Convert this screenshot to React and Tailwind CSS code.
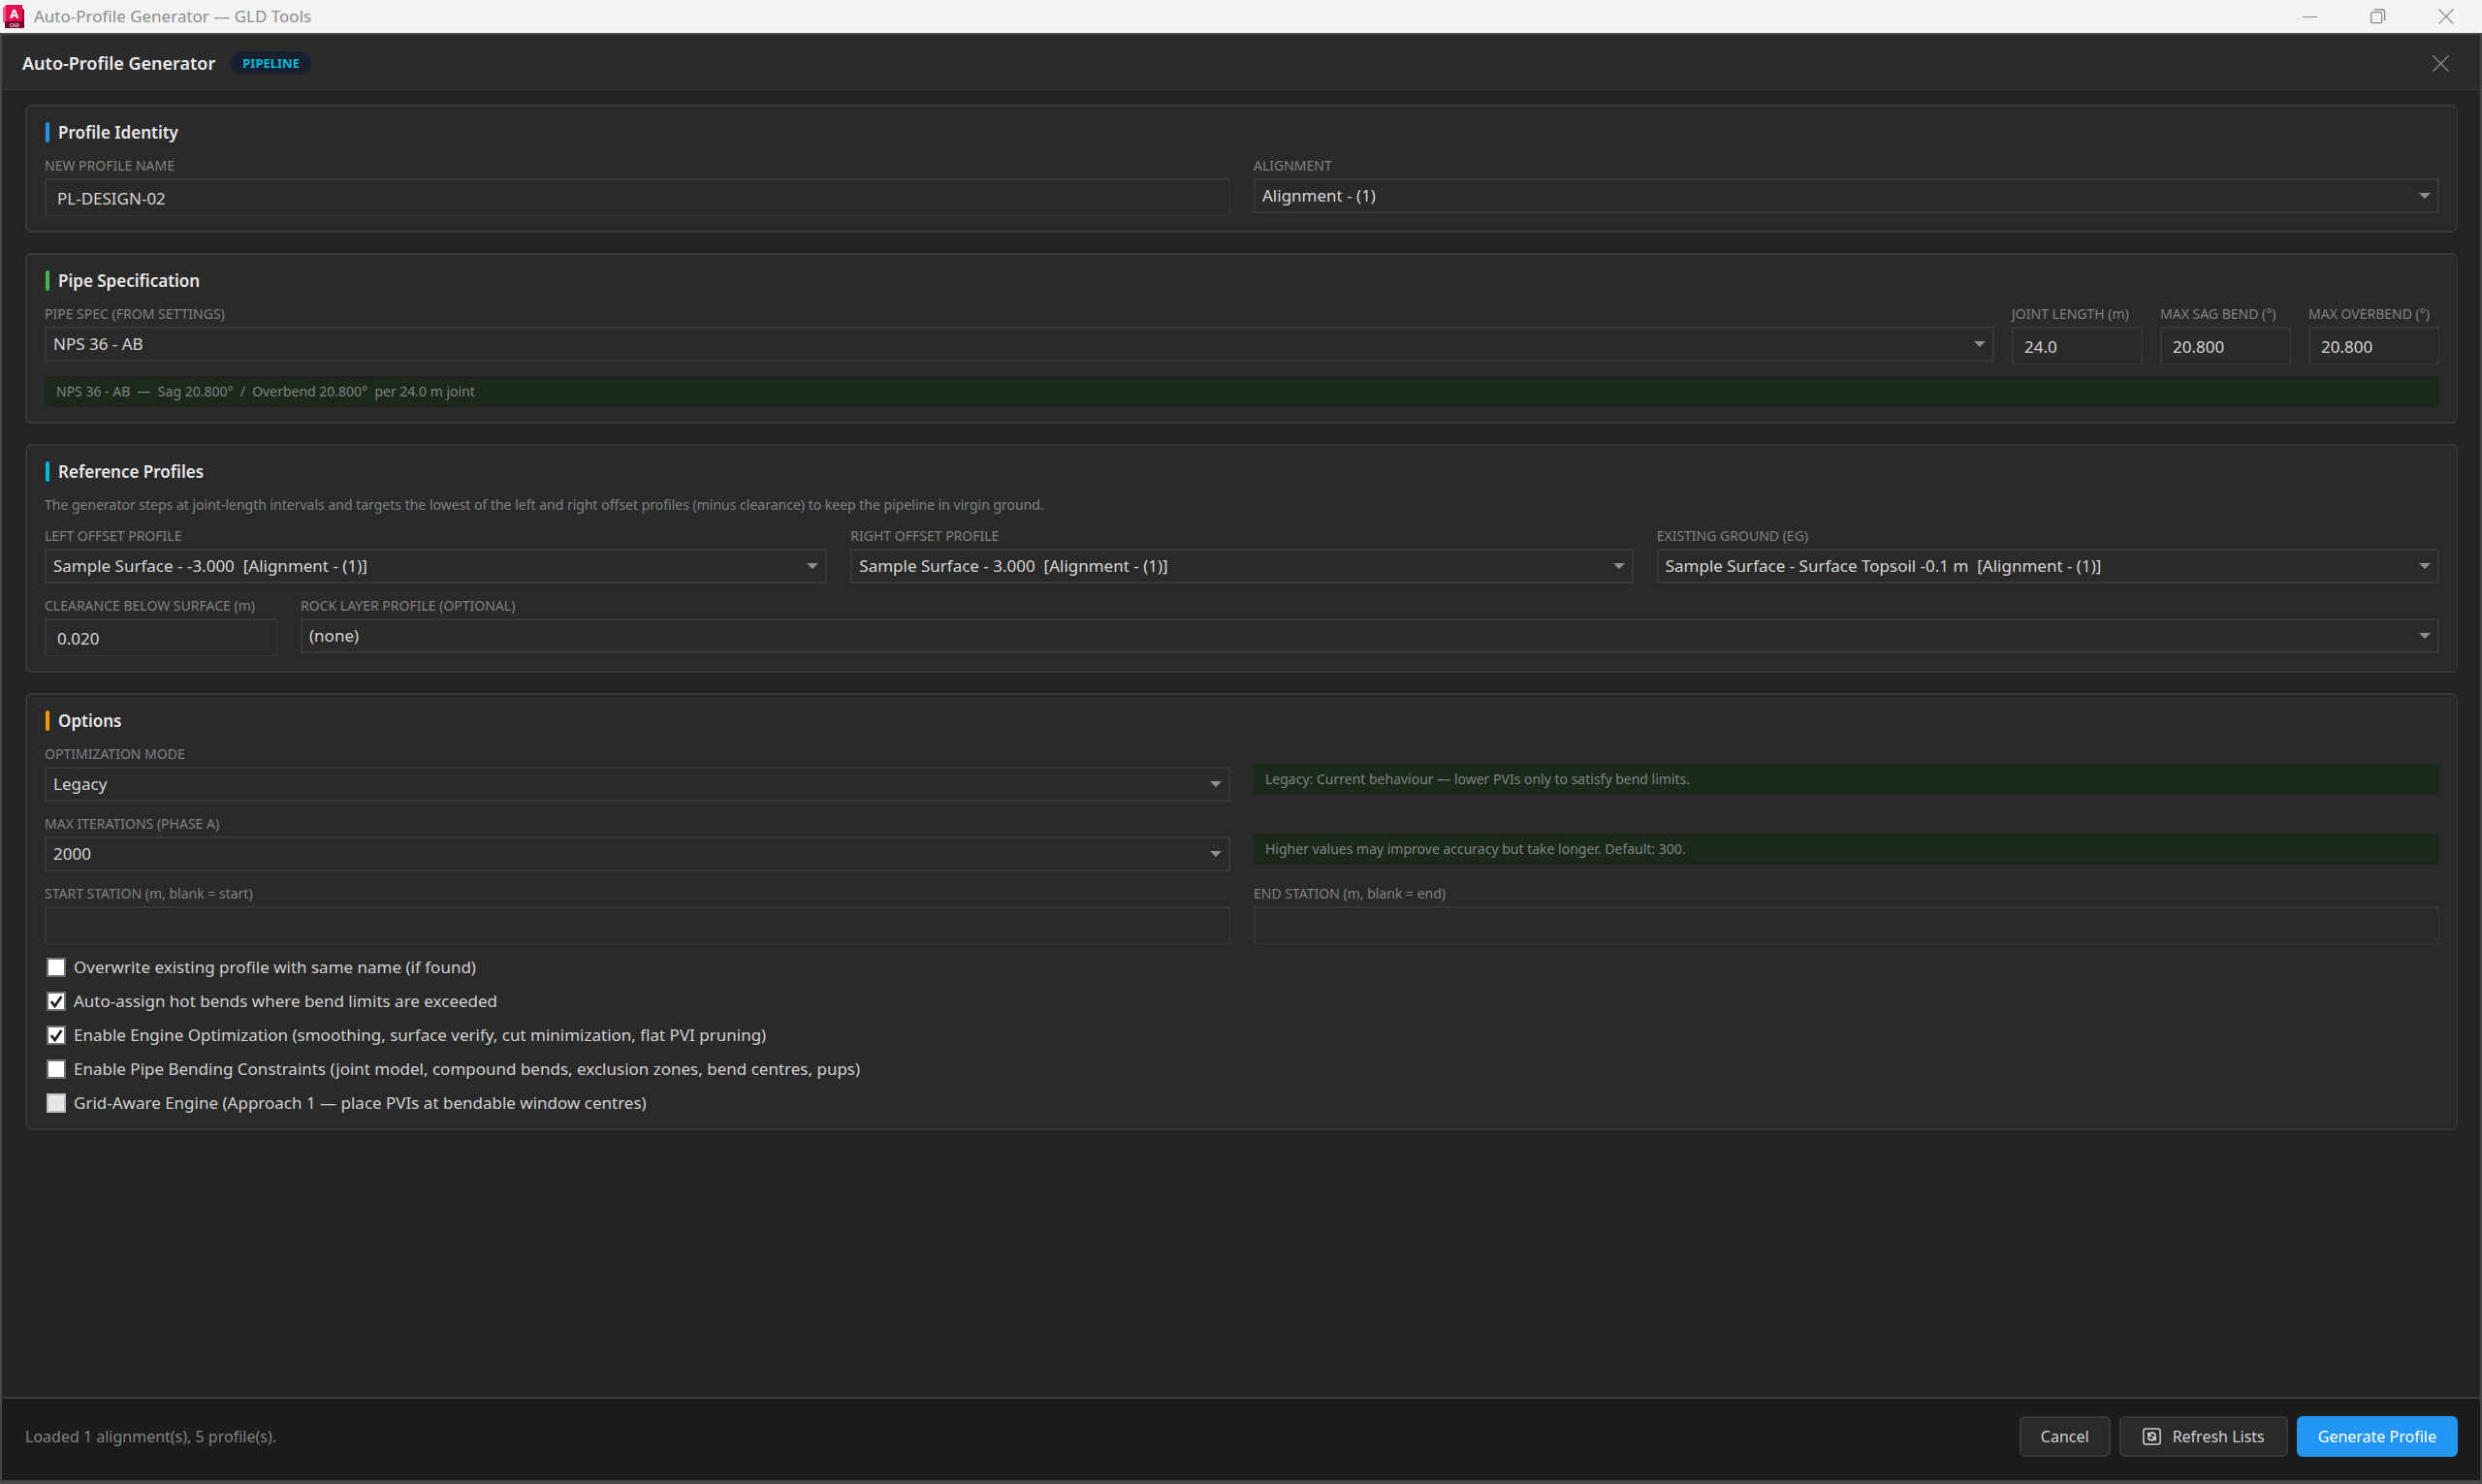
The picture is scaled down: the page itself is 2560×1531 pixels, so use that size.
import { useId } from "react";

function Card({ accent, title, children }) {
  return (
    <section className="rounded-md border-2 border-r border-[#383838] bg-[#2a2a2a] px-[18px] pt-4 pb-[15px]">
      <div className="mb-[13px] flex h-[21px] items-center gap-[9px]">
        <span className={`ml-px h-[21px] w-1 rounded-xs ${accent}`}></span>
        <h2 className="text-[17px] leading-[21px] font-semibold text-[#e8e8e8]">{title}</h2>
      </div>
      {children}
    </section>
  );
}

function Label({ htmlFor, children }) {
  return (
    <label
      htmlFor={htmlFor}
      className="mb-[3px] block text-sm leading-[21px] whitespace-nowrap text-[#828282]"
    >
      {children}
    </label>
  );
}

function TextField({ label, value = "", className = "" }) {
  const id = useId();
  return (
    <div className={className}>
      <Label htmlFor={id}>{label}</Label>
      <input
        id={id}
        type="text"
        defaultValue={value}
        className="block h-[39px] w-full border-2 border-r border-b border-[#383838] bg-[#2a2a2a] px-[11px] text-[17px] text-[#d6d6d6] outline-none focus:border-[#2196f3]"
      />
    </div>
  );
}

function SelectField({ label, options, className = "" }) {
  const id = useId();
  return (
    <div className={className}>
      <Label htmlFor={id}>{label}</Label>
      <div className="relative">
        <select
          id={id}
          className="block h-9 w-full appearance-none border-2 border-[#383838] bg-[#2a2a2a] pr-8 pl-[7px] text-[17px] text-[#d6d6d6] outline-none focus:border-[#2196f3]"
        >
          {options.map((o) => (
            <option key={o}>{o}</option>
          ))}
        </select>
        <svg
          className="pointer-events-none absolute top-[15px] right-[9px] h-[6px] w-3 fill-[#8f8f8f]"
          viewBox="0 0 12 6"
        >
          <path d="M0 0h12L6 6z" />
        </svg>
      </div>
    </div>
  );
}

function Hint({ children, className = "" }) {
  return (
    <p
      className={`h-8 rounded bg-[#1b291d] px-3 text-sm leading-8 whitespace-pre text-[#828282] ${className}`}
    >
      {children}
    </p>
  );
}

function CheckField({ label, checked = false, disabled = false }) {
  return (
    <label className="flex h-[23px] w-fit items-center gap-2 text-[17px] leading-[23px] text-[#d0d0d0]">
      <span className="relative ml-0.5 size-5">
        <input
          type="checkbox"
          defaultChecked={checked}
          disabled={disabled}
          className="peer block size-5 appearance-none border-2 border-[#707070] bg-white disabled:border-[#bcbcbc] disabled:bg-[#e6e6e6]"
        />
        <svg
          className="pointer-events-none absolute inset-0 hidden size-5 fill-none stroke-[#212121] peer-checked:block"
          viewBox="0 0 20 20"
        >
          <path d="M4.8 10.2 8.6 15 15.4 5" strokeWidth="2.8" />
        </svg>
      </span>
      {label}
    </label>
  );
}

function AppIcon() {
  return (
    <svg className="h-6 w-[22px]" viewBox="0 0 22 24">
      <path d="M0 3 3 0v18H0z" fill="#f0608a" />
      <path d="M3 0h17v17H3z" fill="#e51050" />
      <path d="M20 3.5 22 5v12h-2z" fill="#a30a35" />
      <path d="M2 17h20v7H2z" fill="#75082c" />
      <text x="11.8" y="13.5" textAnchor="middle" fontSize="13" fontWeight="700" fill="#fff">
        A
      </text>
      <text x="11.8" y="22.5" textAnchor="middle" fontSize="5" fontWeight="700" fill="#e8c8d2">
        CAD
      </text>
    </svg>
  );
}

function RefreshIcon() {
  return (
    <svg className="h-[18px] w-[19px]" viewBox="0 0 19 18">
      <rect x="0.9" y="0.9" width="17.2" height="16.2" rx="2.5" fill="none" stroke="#d0d0d0" strokeWidth="1.5" />
      <g fill="none" stroke="#d0d0d0" strokeWidth="1.9">
        <path d="M7 6.2c2.600-2 6-.7 6.4 2.300" />
        <path d="M12 11.8c-2.600 2-6 .7-6.400-2.300" />
      </g>
      <path d="M5 4v5h5z" fill="#d0d0d0" />
      <path d="M14 14V9H9z" fill="#d0d0d0" />
    </svg>
  );
}

export default function App() {
  return (
    <div className="flex min-h-screen flex-col bg-[#232323] font-['Noto_Sans','Open_Sans',sans-serif]">
      {/* Window title bar */}
      <div className="flex h-[34px] items-center bg-[#f3f3f3] pr-[29px] pl-[3px] text-[#8c8c8c]">
        <AppIcon />
        <span className="ml-[10px] text-[17px]">Auto-Profile Generator — GLD Tools</span>
        <div className="ml-auto flex items-center gap-[54px]">
          <button aria-label="Minimize">
            <svg className="size-4 fill-none stroke-current" viewBox="0 0 16 16">
              <path d="M0 8.5h15" />
            </svg>
          </button>
          <button aria-label="Restore">
            <svg className="size-4 fill-none stroke-current" viewBox="0 0 16 16">
              <rect x="0.7" y="3.7" width="11" height="11" rx="1.5" strokeWidth="1.3" />
              <path d="M3.5 1h8.500a2.700 2.700 0 0 1 2.700 2.700V12" strokeWidth="1.3" />
            </svg>
          </button>
          <button aria-label="Close window">
            <svg className="size-4 fill-none stroke-current" viewBox="0 0 16 16">
              <path d="M.5.5l15 15M15.5.5l-15 15" strokeWidth="1.2" />
            </svg>
          </button>
        </div>
      </div>

      <div className="flex flex-1 flex-col border-2 border-b-4 border-[#484848]">
        {/* Header */}
        <header className="flex h-[57px] items-center border-b border-[#3a3a3a] bg-[#2b2b2b] pt-0.5 pr-8 pl-[21px]">
          <h1 className="text-lg font-semibold text-[#ececec]">Auto-Profile Generator</h1>
          <span className="ml-4 h-6 rounded-full bg-[#1a2030] px-3 text-[13px] leading-6 font-bold text-[#00bcd4]">
            PIPELINE
          </span>
          <button aria-label="Close" className="ml-auto">
            <svg className="size-[17px] fill-none stroke-[#8a8a8a]" viewBox="0 0 17 17">
              <path d="M.5.5l16 16M16.5.5l-16 16" strokeWidth="1.4" />
            </svg>
          </button>
        </header>

        <main className="flex flex-1 flex-col gap-[21px] pt-[15px] pr-[23px] pb-6 pl-6">
          <Card accent="bg-[#2196f3]" title="Profile Identity">
            <div className="grid grid-cols-2 gap-6">
              <TextField label="NEW PROFILE NAME" value="PL-DESIGN-02" />
              <SelectField label="ALIGNMENT" options={["Alignment - (1)"]} />
            </div>
          </Card>

          <Card accent="bg-[#4caf50]" title="Pipe Specification">
            <div className="flex gap-[18px]">
              <SelectField
                label="PIPE SPEC (FROM SETTINGS)"
                options={["NPS 36 - AB"]}
                className="flex-1"
              />
              <TextField label="JOINT LENGTH (m)" value="24.0" className="w-[135px]" />
              <TextField label="MAX SAG BEND (°)" value="20.800" className="w-[135px]" />
              <TextField label="MAX OVERBEND (°)" value="20.800" className="w-[135px]" />
            </div>
            <Hint className="mt-3">{"NPS 36 - AB  —  Sag 20.800°  /  Overbend 20.800°  per 24.0 m joint"}</Hint>
          </Card>

          <Card accent="bg-[#00bcd4]" title="Reference Profiles">
            <p className="mb-[11px] text-sm leading-[21px] text-[#828282]">
              The generator steps at joint-length intervals and targets the lowest of the left and
              right offset profiles (minus clearance) to keep the pipeline in virgin ground.
            </p>
            <div className="grid grid-cols-3 gap-6">
              <SelectField
                label="LEFT OFFSET PROFILE"
                options={["Sample Surface - -3.000 \u00a0[Alignment - (1)]"]}
              />
              <SelectField
                label="RIGHT OFFSET PROFILE"
                options={["Sample Surface - 3.000 \u00a0[Alignment - (1)]"]}
              />
              <SelectField
                label="EXISTING GROUND (EG)"
                options={["Sample Surface - Surface Topsoil -0.1 m \u00a0[Alignment - (1)]"]}
              />
            </div>
            <div className="mt-3 flex gap-6">
              <TextField label="CLEARANCE BELOW SURFACE (m)" value="0.020" className="w-60" />
              <SelectField
                label="ROCK LAYER PROFILE (OPTIONAL)"
                options={["(none)"]}
                className="flex-1"
              />
            </div>
          </Card>

          <Card accent="bg-[#ff9800]" title="Options">
            <div className="grid grid-cols-2 gap-x-6 gap-y-3">
              <SelectField label="OPTIMIZATION MODE" options={["Legacy"]} />
              <Hint className="mt-[21px]">Legacy: Current behaviour — lower PVIs only to satisfy bend limits.</Hint>
              <SelectField label="MAX ITERATIONS (PHASE A)" options={["2000"]} />
              <Hint className="mt-[21px]">Higher values may improve accuracy but take longer. Default: 300.</Hint>
              <TextField label="START STATION (m, blank = start)" />
              <TextField label="END STATION (m, blank = end)" />
            </div>
            <div className="mt-3 flex flex-col gap-3">
              <CheckField label="Overwrite existing profile with same name (if found)" />
              <CheckField label="Auto-assign hot bends where bend limits are exceeded" checked />
              <CheckField
                label="Enable Engine Optimization (smoothing, surface verify, cut minimization, flat PVI pruning)"
                checked
              />
              <CheckField label="Enable Pipe Bending Constraints (joint model, compound bends, exclusion zones, bend centres, pups)" />
              <CheckField
                label="Grid-Aware Engine (Approach 1 — place PVIs at bendable window centres)"
                disabled
              />
            </div>
          </Card>
        </main>

        {/* Footer */}
        <footer className="flex items-center gap-[9px] border-t-2 border-[#3a3a3a] bg-[#1c1c1c] pt-[18px] pr-[23px] pb-6 pl-6 text-base">
          <span className="mr-auto text-[#828282]">Loaded 1 alignment(s), 5 profile(s).</span>
          <button className="h-[42px] rounded-md border-2 border-[#383838] bg-[#2a2a2a] px-5 text-[#d0d0d0]">
            Cancel
          </button>
          <button className="flex h-[42px] items-center gap-3 rounded-md border-2 border-[#383838] bg-[#2a2a2a] px-[22px] text-[#d0d0d0]">
            <RefreshIcon />
            Refresh Lists
          </button>
          <button className="h-[42px] rounded-md bg-[#2196f3] px-[22px] text-white">
            Generate Profile
          </button>
        </footer>
      </div>
    </div>
  );
}
